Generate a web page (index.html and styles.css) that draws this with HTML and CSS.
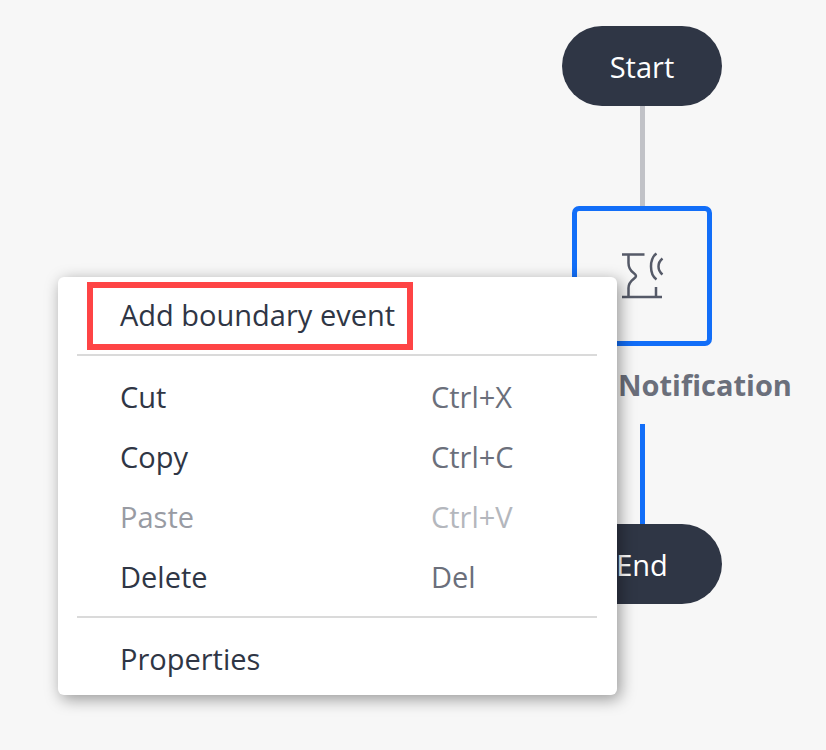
FILE: index.html
```html
<!DOCTYPE html>
<html lang="en">
<head>
<meta charset="utf-8">
<title>Process designer</title>
<link rel="stylesheet" href="styles.css">
</head>
<body>
<main class="canvas">
  <div class="line line-in"></div>
  <div class="line line-out"></div>
  <div class="node terminal start">Start</div>
  <div class="node task">
    <svg class="task-icon" viewBox="2 1 60 60" aria-hidden="true">
      <path d="M12 9.500H34.500M12 52H52M18.500 9.500V18C18.500 28 26 27.500 26 31C26 34 18.500 35 18.500 43V52M46 42V52"/>
      <path d="M46.500 8.500C43 11 41 16 41 21.500C41 27 43 32 46.500 34.500M52.500 13.500C50 15.500 48.500 18 48.500 21.500C48.500 25 50 27.500 52.500 29.500"/>
    </svg>
  </div>
  <div class="task-label">Notification</div>
  <div class="node terminal end">End</div>

  <div class="menu" role="menu">
    <button class="item" role="menuitem"><span>Add boundary event</span></button>
    <hr class="separator">
    <button class="item" role="menuitem"><span>Cut</span><span class="shortcut">Ctrl+X</span></button>
    <button class="item" role="menuitem"><span>Copy</span><span class="shortcut">Ctrl+C</span></button>
    <button class="item" role="menuitem" disabled><span>Paste</span><span class="shortcut">Ctrl+V</span></button>
    <button class="item" role="menuitem"><span>Delete</span><span class="shortcut">Del</span></button>
    <hr class="separator">
    <button class="item" role="menuitem"><span>Properties</span></button>
    <div class="highlight"></div>
  </div>
</main>
</body>
</html>
```

FILE: styles.css
```css
* {
  box-sizing: border-box;
}

body {
  margin: 0;
  background: #f7f7f7;
  color: #2f3645;
  font: 29px/40px "Open Sans", "Noto Sans", sans-serif;
}

.canvas {
  position: relative;
  min-height: 100vh;
  overflow: hidden;
}

.node {
  position: absolute;
  display: flex;
  align-items: center;
  justify-content: center;
}

.terminal {
  left: 562px;
  width: 160px;
  height: 80px;
  padding-top: 2px;
  border-radius: 40px;
  background: #2f3645;
  color: #fff;
}

.start {
  top: 26px;
}

.end {
  top: 524px;
}

.task {
  left: 572px;
  top: 206px;
  width: 140px;
  height: 140px;
  border: 5px solid #126ef8;
  border-radius: 7px;
}

.task-icon {
  width: 60px;
  height: 60px;
  fill: none;
  stroke: #555a68;
  stroke-width: 2.5;
}

.task-label {
  position: absolute;
  left: 618px;
  top: 365px;
  color: #6b6f7b;
  font-weight: 700;
}

.line {
  position: absolute;
  left: 640px;
  width: 5px;
  height: 100px;
}

.line-in {
  top: 106px;
  background: #c1c2c7;
}

.line-out {
  top: 424px;
  background: #126ef8;
}

.menu {
  position: absolute;
  left: 58px;
  top: 277px;
  width: 559px;
  padding: 9px 20px 5px 19px;
  border-radius: 6px;
  background: #fff;
  box-shadow: 3px 4px 16px rgba(0, 0, 0, 0.4);
}

.item {
  display: grid;
  grid-template-columns: 311px 1fr;
  align-items: center;
  width: 100%;
  height: 60px;
  padding: 0 0 2px 43px;
  border: 0;
  background: none;
  color: #2f3645;
  font: inherit;
  text-align: left;
  white-space: nowrap;
}

.shortcut {
  color: #6b6f7b;
}

.item:disabled {
  color: #989ba3;
}

.item:disabled .shortcut {
  color: #b4b7bd;
}

.separator {
  height: 2px;
  margin: 8px 0 12px;
  border: 0;
  background: #dadada;
}

.highlight {
  position: absolute;
  left: 29px;
  top: 5px;
  width: 326px;
  height: 68px;
  border: 6px solid #fe4445;
  pointer-events: none;
}
```
